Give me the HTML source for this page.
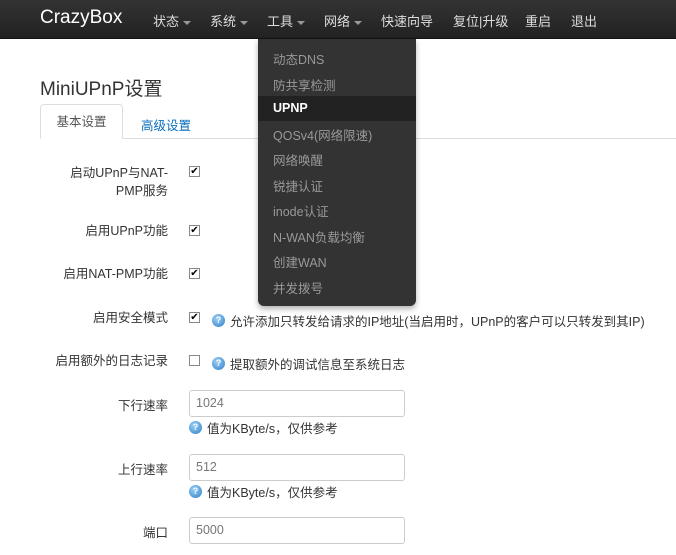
<!DOCTYPE html>
<html><head><meta charset="utf-8"><style>
*{margin:0;padding:0;box-sizing:border-box}
body{width:676px;height:555px;overflow:hidden;background:#fff;font-family:"Liberation Sans","Noto Sans CJK SC",sans-serif;font-size:12.5px;color:#333;position:relative}
.nav{position:absolute;left:0;top:0;width:676px;height:39px;background:linear-gradient(#333,#222);border-bottom:1px solid #111;z-index:2}
.nav span{position:absolute;top:11px;color:#ddd;font-size:13px}
.brand{position:absolute;left:40px;top:7px;color:#fff;font-size:19px}
.caret{display:inline-block;border-top:4px solid #999;border-left:4px solid transparent;border-right:4px solid transparent;vertical-align:middle;margin-left:4px}
.dd{position:absolute;left:258px;top:39px;width:158px;height:267px;background:#333;border-radius:0 0 6px 6px;box-shadow:0 3px 6px rgba(0,0,0,.3);z-index:3}
.dd div{position:absolute;left:15px;color:#999;font-size:12.5px}
.dd .act{left:0;width:158px;height:25px;background:#222;color:#fff;padding-left:15px;line-height:25px;font-weight:bold}
h2{position:absolute;left:40px;top:74px;font-size:19px;font-weight:normal;color:#333}
.tabline{position:absolute;left:40px;top:138px;width:636px;border-top:1px solid #ddd}
.tab1{position:absolute;left:40px;top:104px;width:83px;height:35px;border:1px solid #ddd;border-bottom:1px solid #fff;border-radius:4px 4px 0 0;background:#fff;color:#555;text-align:center;line-height:35px;font-size:12.5px}
.tab2{position:absolute;left:141px;top:115px;color:#0a6ebd;font-size:12.5px}
.lbl{position:absolute;right:508px;text-align:right;color:#333;line-height:18px}
.cb{position:absolute;left:189px;width:11px;height:11px;border:1px solid #888;background:#fff;font-size:10px;line-height:9px;text-align:center;color:#000}
.help{position:absolute;display:inline-block;width:13px;height:13px;border-radius:50%;background:radial-gradient(circle at 40% 35%,#9cd0f5,#2f7fc7);color:#fff;font-size:9px;line-height:13px;text-align:center;font-weight:bold}
.txt{position:absolute;color:#333}
.inp{position:absolute;left:189px;width:216px;height:27px;border:1px solid #ccc;border-radius:3px;padding-left:6px;line-height:25px;color:#777}
</style></head><body>
<div class="nav">
<div class="brand">CrazyBox</div>
<span style="left:153px">状态<i class="caret"></i></span>
<span style="left:210px">系统<i class="caret"></i></span>
<span style="left:267px">工具<i class="caret"></i></span>
<span style="left:324px">网络<i class="caret"></i></span>
<span style="left:381px">快速向导</span>
<span style="left:453px">复位|升级</span>
<span style="left:525px">重启</span>
<span style="left:571px">退出</span>
</div>
<div class="dd">
<div style="top:10px">动态DNS</div>
<div style="top:36px">防共享检测</div>
<div class="act" style="top:57px">UPNP</div>
<div style="top:86px">QOSv4(网络限速)</div>
<div style="top:111px">网络唤醒</div>
<div style="top:137px">锐捷认证</div>
<div style="top:162px">inode认证</div>
<div style="top:188px">N-WAN负载均衡</div>
<div style="top:213px">创建WAN</div>
<div style="top:239px">并发拨号</div>
</div>
<h2>MiniUPnP设置</h2>
<div class="tabline"></div>
<div class="tab1">基本设置</div>
<div class="tab2">高级设置</div>

<div class="lbl" style="top:164px">启动UPnP与NAT-<br>PMP服务</div><div class="cb" style="top:166px">✔</div>
<div class="lbl" style="top:222px">启用UPnP功能</div><div class="cb" style="top:225px">✔</div>
<div class="lbl" style="top:265px">启用NAT-PMP功能</div><div class="cb" style="top:268px">✔</div>
<div class="lbl" style="top:309px">启用安全模式</div><div class="cb" style="top:312px">✔</div>
<span class="help" style="left:212px;top:314px">?</span><div class="txt" style="left:230px;top:311px">允许添加只转发给请求的IP地址(当启用时，UPnP的客户可以只转发到其IP)</div>
<div class="lbl" style="top:352px">启用额外的日志记录</div><div class="cb" style="top:355px"></div>
<span class="help" style="left:212px;top:357px">?</span><div class="txt" style="left:230px;top:354px">提取额外的调试信息至系统日志</div>
<div class="lbl" style="top:397px">下行速率</div><div class="inp" style="top:390px">1024</div>
<span class="help" style="left:189px;top:421px">?</span><div class="txt" style="left:207px;top:418px">值为KByte/s，仅供参考</div>
<div class="lbl" style="top:461px">上行速率</div><div class="inp" style="top:454px">512</div>
<span class="help" style="left:189px;top:485px">?</span><div class="txt" style="left:207px;top:482px">值为KByte/s，仅供参考</div>
<div class="lbl" style="top:524px">端口</div><div class="inp" style="top:517px">5000</div>
</body></html>
